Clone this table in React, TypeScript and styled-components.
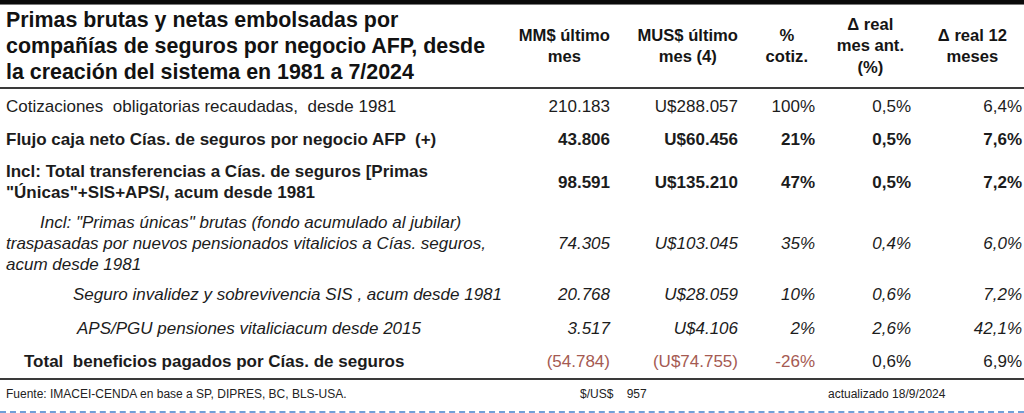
import React, { FC } from 'react';
import styled, { createGlobalStyle } from 'styled-components';

const GlobalStyle = createGlobalStyle`
  html, body {
    margin: 0;
    padding: 0;
    background: #ffffff;
  }

  body {
    font-family: 'Liberation Sans', Arial, sans-serif;
    color: #1c1c1c;
  }
`;

const COLUMNS = '514px 90px 128px 77px 96px 111px';

const Frame = styled.div`
  width: 1024px;
  height: 413px;
  box-sizing: border-box;
  border-top: 4px solid #0a0a0a;
  overflow: hidden;
  background: #fff;
`;

const Header = styled.div`
  display: grid;
  grid-template-columns: ${COLUMNS};
  height: 85px;
  box-sizing: border-box;
  padding: 0 2px 0 6px;
  border-top: 1px solid #7a7a7a;
  border-bottom: 2px solid #3a3a3a;
  align-items: center;
`;

const Title = styled.h1`
  margin: 0;
  font-size: 21.4px;
  line-height: 26px;
  font-weight: 700;
  color: #121212;
  white-space: pre;
`;

const HeadCell = styled.div<{ $pr: number }>`
  justify-self: end;
  padding-right: ${(p) => p.$pr}px;
  text-align: center;
  font-size: 16.6px;
  line-height: 21.5px;
  font-weight: 700;
  color: #151515;
  white-space: pre;
`;

const Body = styled.div`
  display: flex;
  flex-direction: column;
`;

const Row = styled.div<{ $h: number; $bold?: boolean; $italic?: boolean }>`
  display: grid;
  grid-template-columns: ${COLUMNS};
  height: ${(p) => p.$h}px;
  padding: 0 2px 0 6px;
  align-items: center;
  font-size: 17px;
  line-height: 21px;
  font-weight: ${(p) => (p.$bold ? 700 : 400)};
  font-style: ${(p) => (p.$italic ? 'italic' : 'normal')};
`;

const Label = styled.div<{ $indent: number; $hang: number; $bold?: boolean }>`
  padding-left: ${(p) => p.$indent}px;
  text-indent: ${(p) => p.$hang}px;
  white-space: pre-wrap;
  font-weight: ${(p) => (p.$bold ? 700 : 'inherit')};
`;

const Num = styled.div<{ $red?: boolean }>`
  justify-self: end;
  text-align: right;
  white-space: nowrap;
  color: ${(p) => (p.$red ? '#a55a52' : 'inherit')};
`;

const Footer = styled.div`
  display: grid;
  grid-template-columns: 574px 248px 1fr;
  height: 35px;
  box-sizing: border-box;
  padding: 0 0 3px 6px;
  align-items: center;
  border-top: 2px solid #3a3a3a;
  border-bottom: 2px dashed #6f9fd8;
  font-size: 12px;
  color: #222;
  white-space: pre;
`;

interface Line {
  label: string;
  h: number;
  indent?: number;
  hang?: number;
  bold?: boolean;
  labelBold?: boolean;
  italic?: boolean;
  values: string[];
  red?: number;
}

const rows: Line[] = [
  {
    label: 'Cotizaciones  obligatorias recaudadas,  desde 1981',
    h: 34,
    values: ['210.183', 'U$288.057', '100%', '0,5%', '6,4%'],
  },
  {
    label: 'Flujo caja neto Cías. de seguros por negocio AFP  (+)',
    h: 32,
    bold: true,
    values: ['43.806', 'U$60.456', '21%', '0,5%', '7,6%'],
  },
  {
    label: 'Incl: Total transferencias a Cías. de seguros [Primas\n"Únicas"+SIS+APS/, acum desde 1981',
    h: 54,
    bold: true,
    values: ['98.591', 'U$135.210', '47%', '0,5%', '7,2%'],
  },
  {
    label:
      'Incl: "Primas únicas" brutas (fondo acumulado al jubilar)\ntraspasadas por nuevos pensionados vitalicios a Cías. seguros,\nacum desde 1981',
    h: 68,
    hang: 34,
    italic: true,
    values: ['74.305', 'U$103.045', '35%', '0,4%', '6,0%'],
  },
  {
    label: 'Seguro invalidez y sobrevivencia SIS , acum desde 1981',
    h: 34,
    indent: 67,
    italic: true,
    values: ['20.768', 'U$28.059', '10%', '0,6%', '7,2%'],
  },
  {
    label: 'APS/PGU pensiones vitaliciacum desde 2015',
    h: 34,
    indent: 71,
    italic: true,
    values: ['3.517', 'U$4.106', '2%', '2,6%', '42,1%'],
  },
  {
    label: 'Total  beneficios pagados por Cías. de seguros',
    h: 33,
    indent: 18,
    labelBold: true,
    values: ['(54.784)', '(U$74.755)', '-26%', '0,6%', '6,9%'],
    red: 3,
  },
];

const heads: { text: string; pr: number }[] = [
  { text: 'MM$ último\nmes', pr: 0 },
  { text: 'MUS$ último\nmes (4)', pr: 0 },
  { text: '%\ncotiz.', pr: 7 },
  { text: 'Δ real\nmes ant.\n(%)', pr: 7 },
  { text: 'Δ real 12\nmeses', pr: 15 },
];

const App: FC = () => (
  <>
    <GlobalStyle />
    <Frame>
      <Header>
        <Title>
          {'Primas brutas y netas embolsadas por\ncompañías de seguros por negocio AFP, desde\nla creación del sistema en 1981 a 7/2024'}
        </Title>
        {heads.map((h) => (
          <HeadCell key={h.text} $pr={h.pr}>
            {h.text}
          </HeadCell>
        ))}
      </Header>
      <Body>
        {rows.map((r) => (
          <Row key={r.label} $h={r.h} $bold={r.bold} $italic={r.italic}>
            <Label $indent={r.indent ?? 0} $hang={r.hang ?? 0} $bold={r.labelBold}>
              {r.label}
            </Label>
            {r.values.map((v, i) => (
              <Num key={i} $red={r.red !== undefined && i < r.red}>
                {v}
              </Num>
            ))}
          </Row>
        ))}
      </Body>
      <Footer>
        <span>Fuente: IMACEI-CENDA en base a SP, DIPRES, BC, BLS-USA.</span>
        <span>{'$/US$    957'}</span>
        <span>actualizado 18/9/2024</span>
      </Footer>
    </Frame>
  </>
);

export default App;
